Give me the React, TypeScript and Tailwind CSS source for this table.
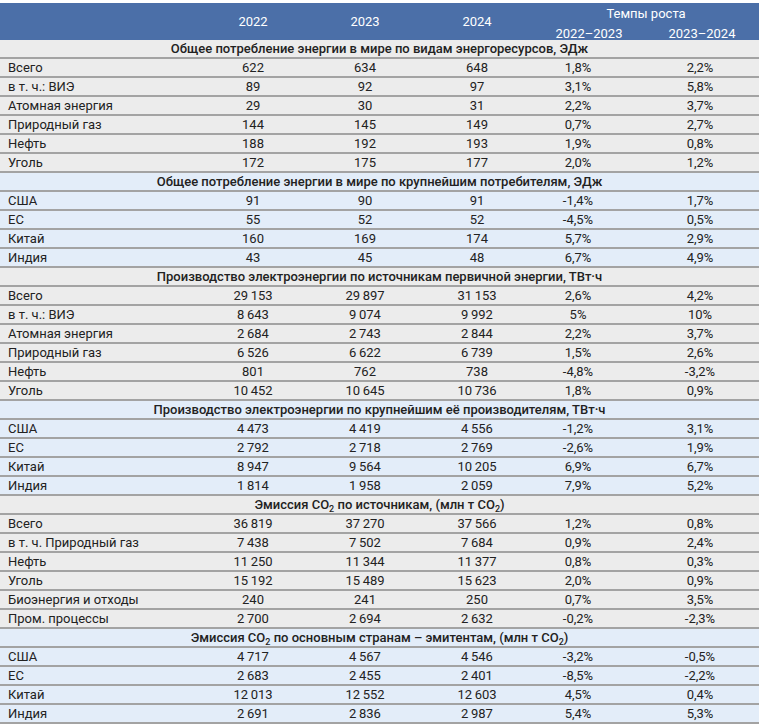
const sp = "\u2009";
const n = (s: string) => s.replace(/ /g, sp);

type Row = [string, string, string, string, string, string];

const Co2 = () => (
  <>
    CO<sub className="text-[9px] relative top-[3px] bottom-auto">2</sub>
  </>
);

const sections: { title: React.ReactNode; tone: "gray" | "blue"; rows: Row[] }[] = [
  {
    title: "Общее потребление энергии в мире по видам энергоресурсов, ЭДж",
    tone: "gray",
    rows: [
      ["Всего", "622", "634", "648", "1,8%", "2,2%"],
      ["в т. ч.: ВИЭ", "89", "92", "97", "3,1%", "5,8%"],
      ["Атомная энергия", "29", "30", "31", "2,2%", "3,7%"],
      ["Природный газ", "144", "145", "149", "0,7%", "2,7%"],
      ["Нефть", "188", "192", "193", "1,9%", "0,8%"],
      ["Уголь", "172", "175", "177", "2,0%", "1,2%"],
    ],
  },
  {
    title: "Общее потребление энергии в мире по крупнейшим потребителям, ЭДж",
    tone: "blue",
    rows: [
      ["США", "91", "90", "91", "-1,4%", "1,7%"],
      ["ЕС", "55", "52", "52", "-4,5%", "0,5%"],
      ["Китай", "160", "169", "174", "5,7%", "2,9%"],
      ["Индия", "43", "45", "48", "6,7%", "4,9%"],
    ],
  },
  {
    title: "Производство электроэнергии по источникам первичной энергии, ТВт·ч",
    tone: "gray",
    rows: [
      ["Всего", "29 153", "29 897", "31 153", "2,6%", "4,2%"],
      ["в т. ч.: ВИЭ", "8 643", "9 074", "9 992", "5%", "10%"],
      ["Атомная энергия", "2 684", "2 743", "2 844", "2,2%", "3,7%"],
      ["Природный газ", "6 526", "6 622", "6 739", "1,5%", "2,6%"],
      ["Нефть", "801", "762", "738", "-4,8%", "-3,2%"],
      ["Уголь", "10 452", "10 645", "10 736", "1,8%", "0,9%"],
    ],
  },
  {
    title: "Производство электроэнергии по крупнейшим её производителям, ТВт·ч",
    tone: "blue",
    rows: [
      ["США", "4 473", "4 419", "4 556", "-1,2%", "3,1%"],
      ["ЕС", "2 792", "2 718", "2 769", "-2,6%", "1,9%"],
      ["Китай", "8 947", "9 564", "10 205", "6,9%", "6,7%"],
      ["Индия", "1 814", "1 958", "2 059", "7,9%", "5,2%"],
    ],
  },
  {
    title: (
      <>
        Эмиссия <Co2 /> по источникам, (млн т <Co2 />)
      </>
    ),
    tone: "gray",
    rows: [
      ["Всего", "36 819", "37 270", "37 566", "1,2%", "0,8%"],
      ["в т. ч. Природный газ", "7 438", "7 502", "7 684", "0,9%", "2,4%"],
      ["Нефть", "11 250", "11 344", "11 377", "0,8%", "0,3%"],
      ["Уголь", "15 192", "15 489", "15 623", "2,0%", "0,9%"],
      ["Биоэнергия и отходы", "240", "241", "250", "0,7%", "3,5%"],
      ["Пром. процессы", "2 700", "2 694", "2 632", "-0,2%", "-2,3%"],
    ],
  },
  {
    title: (
      <>
        Эмиссия <Co2 /> по основным странам – эмитентам, (млн т <Co2 />)
      </>
    ),
    tone: "blue",
    rows: [
      ["США", "4 717", "4 567", "4 546", "-3,2%", "-0,5%"],
      ["ЕС", "2 683", "2 455", "2 401", "-8,5%", "-2,2%"],
      ["Китай", "12 013", "12 552", "12 603", "4,5%", "0,4%"],
      ["Индия", "2 691", "2 836", "2 987", "5,4%", "5,3%"],
    ],
  },
];

const grid = "grid grid-cols-[197px_112px_112px_112px_112px_114px]";

export default function App() {
  return (
    <div className="bg-white pt-[3px] w-[765px] text-[13px] text-[#222] font-['Roboto',sans-serif] leading-none">
      <div className="w-[759px]">
        <div className={`${grid} h-[37px] bg-[#4b6fa8] text-white`}>
          <div />
          <div className="flex items-center justify-center">2022</div>
          <div className="flex items-center justify-center">2023</div>
          <div className="flex items-center justify-center">2024</div>
          <div className="col-span-2 flex flex-col">
            <div className="h-[20px] flex items-center justify-center">Темпы роста</div>
            <div className="grid grid-cols-[112px_114px] flex-1 pt-[3px]">
              <div className="flex items-center justify-center">2022–2023</div>
              <div className="flex items-center justify-center">2023–2024</div>
            </div>
          </div>
        </div>
        {sections.map((s, i) => {
          const bg = s.tone === "gray" ? "bg-[#ececec]" : "bg-[#e3edf9]";
          return (
            <div key={i} className={bg}>
              <div className="h-[19px] border-b-2 border-[#a3a3a3] flex items-center justify-center font-medium">
                <span>{s.title}</span>
              </div>
              {s.rows.map((r, j) => (
                <div key={j} className={`${grid} h-[19px] border-b-2 border-[#a3a3a3] items-center`}>
                  <div className="pl-2">{r[0]}</div>
                  <div className="text-center">{n(r[1])}</div>
                  <div className="text-center">{n(r[2])}</div>
                  <div className="text-center">{n(r[3])}</div>
                  <div className="text-center pr-[22px]">{r[4]}</div>
                  <div className="text-center pr-[4px]">{r[5]}</div>
                </div>
              ))}
            </div>
          );
        })}
      </div>
    </div>
  );
}
